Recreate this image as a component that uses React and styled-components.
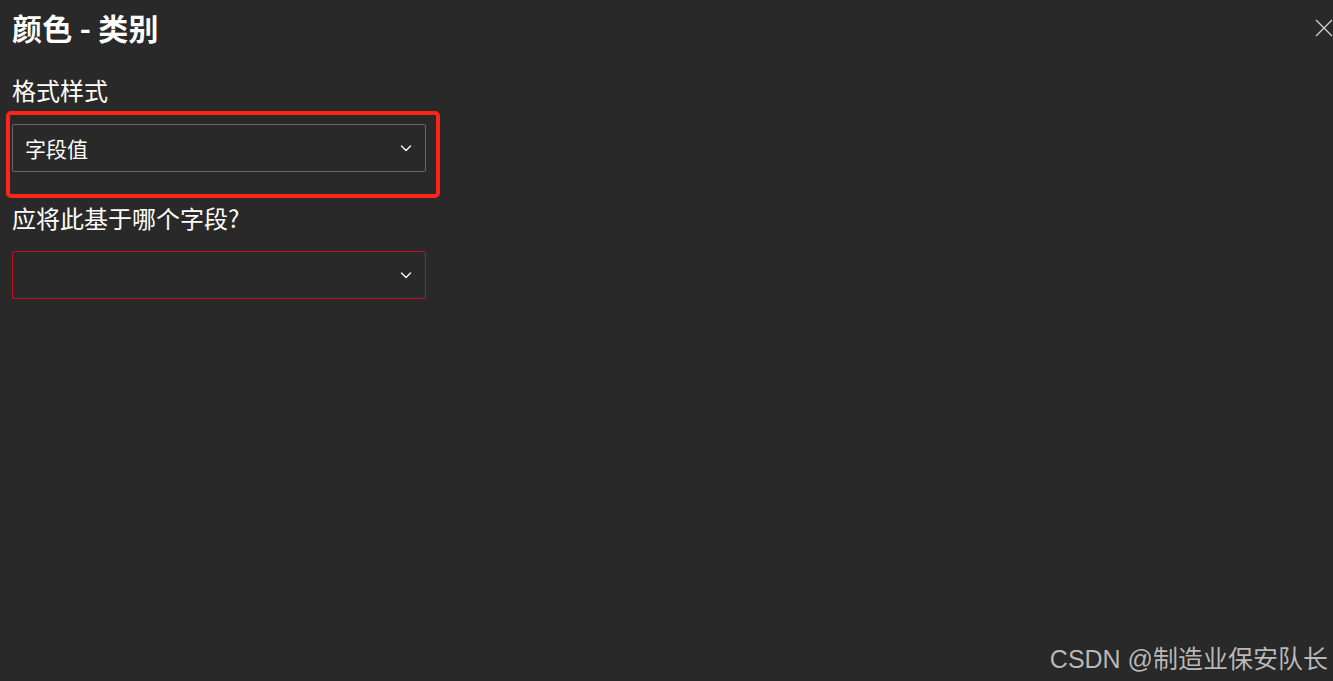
import React from 'react';
import styled, { createGlobalStyle } from 'styled-components';

const GlobalStyle = createGlobalStyle`
  html, body {
    margin: 0;
    padding: 0;
    background: #292929;
  }
  body {
    font-family: "Noto Sans CJK SC", "Noto Sans", sans-serif;
    color: #ffffff;
  }
`;

const Page = styled.div`
  position: relative;
  width: 1333px;
  height: 681px;
  overflow: hidden;
  background: #292929;
  padding-left: 12px;
  box-sizing: border-box;
`;

const Header = styled.div`
  display: flex;
  justify-content: space-between;
  align-items: center;
  height: 40px;
  margin-top: 7px;
`;

const Title = styled.h1`
  margin: 0;
  font-size: 30px;
  line-height: 40px;
  font-weight: 700;
  letter-spacing: 0.3px;
`;

const CloseButton = styled.button`
  background: none;
  border: none;
  padding: 0;
  width: 18px;
  height: 18px;
  display: flex;
  margin-top: 2px;
  cursor: pointer;
`;

const Label = styled.div`
  font-size: 24px;
  line-height: 32px;
  margin-top: ${p => p.$top}px;
`;

const Field = styled.div`
  position: relative;
  width: 414px;
  margin-top: ${p => p.$top}px;
`;

const SelectBox = styled.div`
  box-sizing: border-box;
  height: 48px;
  display: flex;
  align-items: center;
  justify-content: space-between;
  padding: 0 13px 0 12px;
  border: 1px solid ${p => (p.$error ? '#c50f1f' : '#666666')};
  border-radius: 2px;
  font-size: 21px;
  color: #ffffff;
`;

const Highlight = styled.div`
  position: absolute;
  left: -6px;
  top: -13px;
  width: 434px;
  height: 87px;
  box-sizing: border-box;
  border: 4px solid #ff2418;
  border-radius: 5px;
  pointer-events: none;
`;

const Watermark = styled.div`
  position: absolute;
  right: 5px;
  bottom: 6px;
  font-family: "Liberation Sans", "Noto Sans CJK SC", sans-serif;
  font-size: 25px;
  color: #b9b9b9;
  text-shadow: 0 0 1px #1a1a1a;
`;

const Chevron = () => (
  <svg width="12" height="12" viewBox="0 0 12 12" fill="none">
    <path d="M1.5 4 L6 8.5 L10.5 4" stroke="#ffffff" strokeWidth="1.3" strokeLinecap="round" strokeLinejoin="round" />
  </svg>
);

const CloseIcon = () => (
  <svg width="18" height="18" viewBox="0 0 18 18" fill="none">
    <path d="M1 1 L17 17 M17 1 L1 17" stroke="#d0d0d0" strokeWidth="1.3" />
  </svg>
);

export default function App() {
  return (
    <>
      <GlobalStyle />
      <Page>
        <Header>
          <Title>颜色 - 类别</Title>
          <CloseButton aria-label="关闭">
            <CloseIcon />
          </CloseButton>
        </Header>
        <Label $top={27}>格式样式</Label>
        <Field $top={18}>
          <SelectBox>
            <span>字段值</span>
            <Chevron />
          </SelectBox>
          <Highlight />
        </Field>
        <Label $top={30}>应将此基于哪个字段?</Label>
        <Field $top={17}>
          <SelectBox $error>
            <span />
            <Chevron />
          </SelectBox>
        </Field>
        <Watermark>CSDN @制造业保安队长</Watermark>
      </Page>
    </>
  );
}
